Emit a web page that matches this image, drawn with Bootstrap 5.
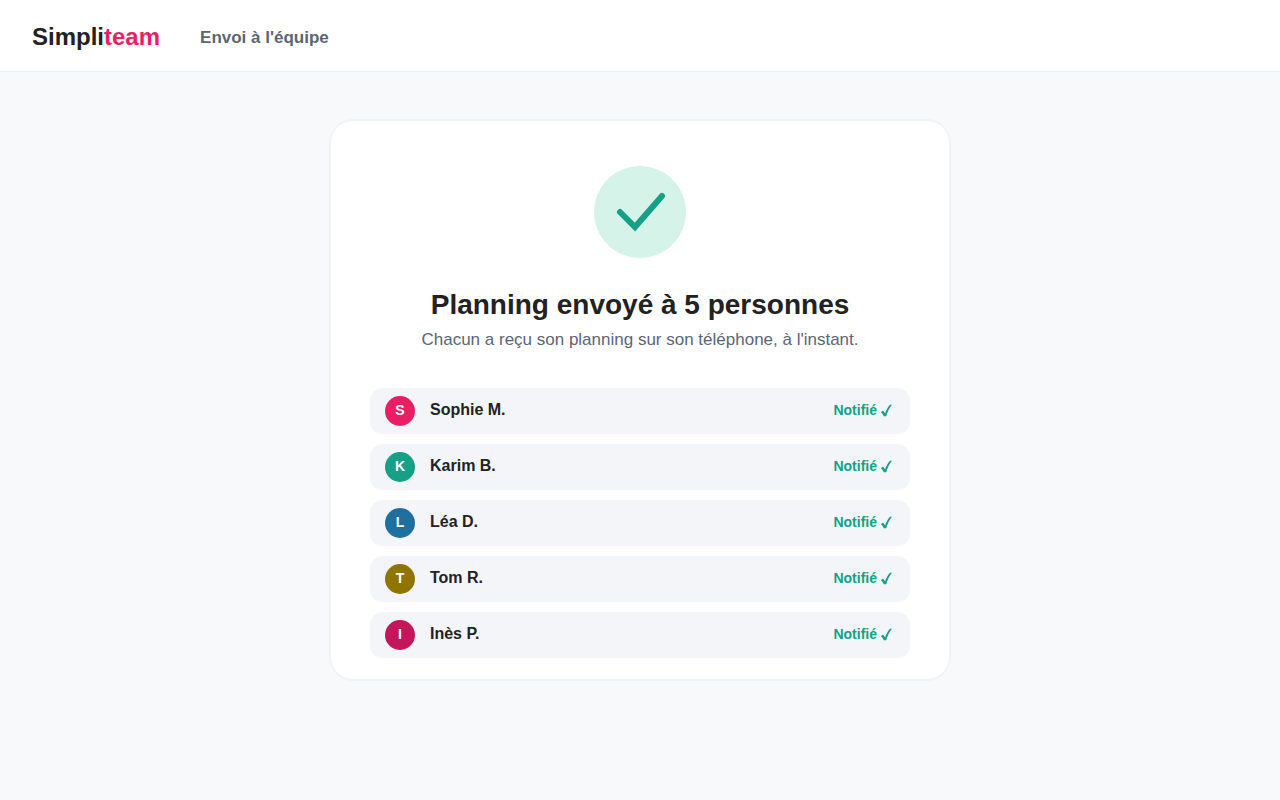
<!DOCTYPE html>
<html lang="fr">
<head>
<meta charset="utf-8">
<meta name="viewport" content="width=device-width, initial-scale=1">
<title>Simpliteam – Envoi à l'équipe</title>
<link href="https://cdn.jsdelivr.net/npm/bootstrap@5.3.0/dist/css/bootstrap.min.css" rel="stylesheet">
<style>
  body { font-family: "Liberation Sans", Arial, sans-serif; background: #f8f9fb; color: #222; }
  .topbar { min-height: 72px; padding: 3px 32px 0; gap: 40px; border-bottom: 1px solid #eceef2; }
  .brand { font-size: 24px; line-height: 28px; color: #222; }
  .brand span { color: #e91e63; }
  .section-name { font-size: 17px; line-height: 20px; padding-top: 2px; color: #5b6675; }
  .page { padding: 47px 16px; }
  .sent-card { max-width: 622px; padding: 45px 39px 21px; border: 2px solid #f1f3f6; border-radius: 24px; }
  .sent-title { font-size: 28px; line-height: 34px; margin: 30px 0 8px; }
  .sent-text { font-size: 17px; line-height: 20px; margin-bottom: 38px; color: #5b6675; }
  .people { gap: 10px; }
  .person { min-height: 46px; padding: 0 18px 0 15px; gap: 15px; border-radius: 12px; background: #f4f5f9; }
  .avatar { width: 30px; height: 30px; font-size: 14px; line-height: 16px; padding-bottom: 2px; }
  .person-name { font-size: 16px; line-height: 18px; padding-bottom: 2px; }
  .notified { font-size: 14px; line-height: 16px; padding-bottom: 2px; gap: 4px; color: #16a085; }
  .bg-pink { background: #e91e63; }
  .bg-green { background: #16a085; }
  .bg-blue { background: #1f6f9f; }
  .bg-olive { background: #8f7500; }
  .bg-berry { background: #c2185b; }
</style>
</head>
<body>
<svg class="d-none" aria-hidden="true">
  <symbol id="tick" viewBox="0 0 11 13"><path d="M0 8 L2 6.600 L4 9.400 C5 6.500 7 2.800 9 .8 L11 .8 C8.400 4 6.400 8 5.200 12.200 L3 12.200 Z" fill="currentColor"/></symbol>
</svg>
<header class="topbar d-flex align-items-center bg-white">
  <a class="brand fw-bold text-decoration-none" href="#">Simpli<span>team</span></a>
  <div class="section-name fw-bold">Envoi à l'équipe</div>
</header>
<main class="page container">
  <section class="sent-card mx-auto bg-white text-center">
    <svg class="d-block mx-auto" width="92" height="92" viewBox="0 0 92 92" aria-hidden="true">
      <circle cx="46" cy="46" r="46" fill="#d6f3ea"/>
      <path d="M26 46 L41 61 L68 30" fill="none" stroke="#16a085" stroke-width="6" stroke-linecap="round"/>
    </svg>
    <h1 class="sent-title fw-bold">Planning envoyé à 5 personnes</h1>
    <p class="sent-text">Chacun a reçu son planning sur son téléphone, à l'instant.</p>
    <ul class="people list-unstyled d-flex flex-column mb-0">
      <li class="person d-flex align-items-center fw-bold">
        <span class="avatar bg-pink rounded-circle text-white d-flex align-items-center justify-content-center">S</span>
        <span class="person-name">Sophie M.</span>
        <span class="notified ms-auto d-flex align-items-center">Notifié <svg width="11" height="13" aria-hidden="true"><use href="#tick"/></svg></span>
      </li>
      <li class="person d-flex align-items-center fw-bold">
        <span class="avatar bg-green rounded-circle text-white d-flex align-items-center justify-content-center">K</span>
        <span class="person-name">Karim B.</span>
        <span class="notified ms-auto d-flex align-items-center">Notifié <svg width="11" height="13" aria-hidden="true"><use href="#tick"/></svg></span>
      </li>
      <li class="person d-flex align-items-center fw-bold">
        <span class="avatar bg-blue rounded-circle text-white d-flex align-items-center justify-content-center">L</span>
        <span class="person-name">Léa D.</span>
        <span class="notified ms-auto d-flex align-items-center">Notifié <svg width="11" height="13" aria-hidden="true"><use href="#tick"/></svg></span>
      </li>
      <li class="person d-flex align-items-center fw-bold">
        <span class="avatar bg-olive rounded-circle text-white d-flex align-items-center justify-content-center">T</span>
        <span class="person-name">Tom R.</span>
        <span class="notified ms-auto d-flex align-items-center">Notifié <svg width="11" height="13" aria-hidden="true"><use href="#tick"/></svg></span>
      </li>
      <li class="person d-flex align-items-center fw-bold">
        <span class="avatar bg-berry rounded-circle text-white d-flex align-items-center justify-content-center">I</span>
        <span class="person-name">Inès P.</span>
        <span class="notified ms-auto d-flex align-items-center">Notifié <svg width="11" height="13" aria-hidden="true"><use href="#tick"/></svg></span>
      </li>
    </ul>
  </section>
</main>
<script src="https://cdn.jsdelivr.net/npm/bootstrap@5.3.0/dist/js/bootstrap.bundle.min.js"></script>
</body>
</html>
